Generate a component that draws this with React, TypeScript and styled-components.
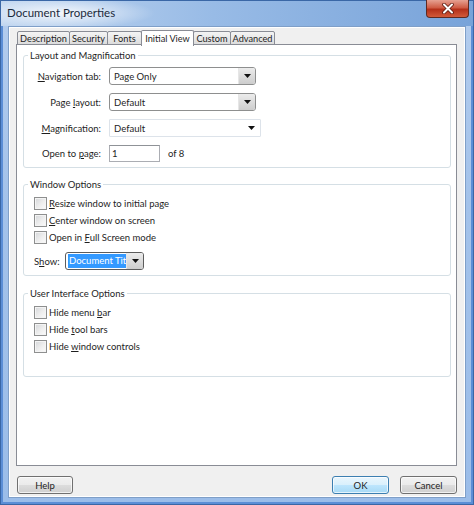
import React from "react";
import styled, { createGlobalStyle } from "styled-components";

const GlobalStyle = createGlobalStyle`
  html, body {
    margin: 0;
    padding: 0;
    background: #7ea6d8;
  }
  body {
    font-family: Lato, "Open Sans", sans-serif;
    font-size: 9.5px;
    color: #1e1e1e;
  }
  * {
    box-sizing: border-box;
  }
`;

const Window = styled.div`
  width: 474px;
  height: 505px;
  display: flex;
  flex-direction: column;
  background: linear-gradient(to bottom, #b4cdee 0%, #a3c2ea 40%, #9bbde9 100%);
  box-shadow: inset 0 0 0 1px #3a67a6, inset 0 0 0 3px #5b8ed6;
  overflow: hidden;
`;

const TitleBar = styled.div`
  height: 26px;
  flex-shrink: 0;
  display: flex;
  align-items: flex-start;
  padding-left: 7px;
  padding-right: 5px;
  background:
    radial-gradient(ellipse 95px 16px at 60px 13px, rgba(255, 255, 255, 0.85), rgba(255, 255, 255, 0)),
    linear-gradient(to right, #c0d6f0 0%, #98bbe6 45%, #78a3d9 100%);
  box-shadow: inset 0 1px 0 #3a67a6, inset 1px 0 0 #3a67a6, inset -1px 0 0 #3a67a6;
`;

const Title = styled.div`
  line-height: 26px;
  font-size: 11.5px;
  color: #1b2a3c;
`;

const CloseButton = styled.div`
  margin-left: auto;
  width: 43px;
  height: 18px;
  display: flex;
  align-items: center;
  justify-content: center;
  border: 1px solid #5e2a22;
  border-top: none;
  border-radius: 0 0 4px 4px;
  background: linear-gradient(to bottom, #e6a192 0%, #cf5c45 45%, #b4301a 55%, #d25a3a 100%);
`;

const Body = styled.div`
  flex: 1;
  margin: 0 8px 7px 8px;
  display: flex;
  flex-direction: column;
  padding: 3px 8px 3px 7px;
  background: #f0f0f0;
  border: 1px solid #7f9fc8;
  box-shadow: inset 0 0 0 1px #ffffff;
`;

const TabStrip = styled.div`
  display: flex;
  align-items: flex-end;
  padding-left: 1px;
  position: relative;
  z-index: 1;
`;

const Tab = styled.div<{ $active?: boolean; $width: number }>`
  width: ${(p) => p.$width}px;
  height: ${(p) => (p.$active ? "16px" : "14px")};
  margin-right: -1px;
  margin-bottom: ${(p) => (p.$active ? "-1px" : "0")};
  display: flex;
  align-items: center;
  justify-content: center;
  font-size: 9.2px;
  border: 1px solid #898c95;
  border-bottom: ${(p) => (p.$active ? "none" : "1px solid #898c95")};
  border-radius: 2px 2px 0 0;
  background: ${(p) =>
    p.$active ? "#ffffff" : "linear-gradient(to bottom, #f4f4f4 0%, #e9e9e9 50%, #dcdcdc 100%)"};
  position: relative;
  z-index: ${(p) => (p.$active ? 2 : 1)};
  white-space: nowrap;
`;

const Panel = styled.div`
  flex: 1;
  margin-top: -1px;
  background: #ffffff;
  border: 1px solid #898c95;
  padding: 4px 5px 0 6px;
  display: flex;
  flex-direction: column;
`;

const Group = styled.fieldset<{ $gap?: number }>`
  margin: 0 0 ${(p) => p.$gap ?? 0}px 0;
  padding: 0;
  min-width: 0;
  border: 1px solid #d5dfe5;
  border-radius: 3px;
`;

const Legend = styled.legend`
  margin-left: 4px;
  padding: 0 2px;
  line-height: 13px;
`;

const GroupContent = styled.div<{ $pad: string }>`
  padding: ${(p) => p.$pad};
`;

const FieldGrid = styled.div`
  display: grid;
  grid-template-columns: 77px auto;
  column-gap: 8px;
  row-gap: 8px;
  align-items: center;
`;

const FieldLabel = styled.div`
  text-align: right;
  white-space: nowrap;
`;

const Key = styled.span`
  text-decoration: underline;
`;

const Select = styled.div<{ $width: number; $flat?: boolean; $focused?: boolean }>`
  width: ${(p) => p.$width}px;
  height: 18px;
  display: flex;
  align-items: stretch;
  border: 1px solid ${(p) => (p.$flat ? "#dde3ea" : p.$focused ? "#5c5c5c" : "#8e8f8f")};
  border-radius: ${(p) => (p.$flat ? "1px" : "3px")};
  background: #ffffff;
  overflow: hidden;
`;

const SelectText = styled.div<{ $focused?: boolean }>`
  flex: 1;
  min-width: 0;
  display: flex;
  align-items: center;
  padding-left: ${(p) => (p.$focused ? "2px" : "4px")};
  white-space: nowrap;
  overflow: hidden;
`;

const Highlight = styled.span`
  background: #3399ff;
  color: #ffffff;
  line-height: 14px;
  padding: 0 1px;
  white-space: nowrap;
`;

const SelectArrow = styled.div<{ $flat?: boolean }>`
  width: 17px;
  flex-shrink: 0;
  display: flex;
  align-items: center;
  justify-content: center;
  background: ${(p) => (p.$flat ? "#ffffff" : "linear-gradient(to bottom, #ececec 0%, #dcdcdc 50%, #cdcdcd 100%)")};
  border-left: ${(p) => (p.$flat ? "none" : "1px solid #e6e6e6")};
`;

const PageRow = styled.div`
  display: flex;
  align-items: center;
  gap: 8px;
`;

const TextInput = styled.div`
  width: 51px;
  height: 17px;
  display: flex;
  align-items: center;
  padding-left: 2px;
  border: 1px solid #abadb3;
  border-top-color: #8f9297;
  background: #ffffff;
`;

const CheckList = styled.div`
  display: flex;
  flex-direction: column;
  gap: 4px;
`;

const CheckRow = styled.div`
  display: flex;
  align-items: center;
  gap: 2px;
  height: 13px;
  white-space: nowrap;
`;

const CheckBox = styled.div`
  width: 13px;
  height: 13px;
  flex-shrink: 0;
  border: 1px solid #8e8f8f;
  background: linear-gradient(135deg, #d4d6d9 0%, #eeeeee 55%, #fbfbfb 100%);
  box-shadow: inset 0 0 0 1px #f4f4f4;
`;

const ShowRow = styled.div`
  display: flex;
  align-items: center;
  margin-top: 8px;
`;

const ShowLabel = styled.div`
  width: 31px;
`;

const Footer = styled.div`
  display: flex;
  align-items: center;
  margin-top: 10px;
  padding-left: 1px;
`;

const Button = styled.div<{ $width: number; $default?: boolean }>`
  width: ${(p) => p.$width}px;
  height: 18px;
  display: flex;
  align-items: center;
  justify-content: center;
  border: 1px solid ${(p) => (p.$default ? "#3c7fb1" : "#707070")};
  border-radius: 3px;
  background: ${(p) =>
    p.$default
      ? "linear-gradient(to bottom, #eaf6fd 0%, #d9f0fc 50%, #bee6fd 50%, #a7d9f5 100%)"
      : "linear-gradient(to bottom, #f2f2f2 0%, #ebebeb 50%, #dddddd 50%, #cfcfcf 100%)"};
  box-shadow: inset 0 0 0 1px rgba(255, 255, 255, 0.7);
`;

const Spacer = styled.div`
  flex: 1;
`;

const ButtonGap = styled.div`
  width: 11px;
`;

const Arrow = () => (
  <svg width="7" height="4" viewBox="0 0 7 4">
    <path d="M0 0h7L3.5 4z" fill="#111" />
  </svg>
);

const CloseGlyph = () => (
  <svg width="12" height="11" viewBox="0 0 12 11">
    <path d="M2 1.5l8 8M10 1.5l-8 8" stroke="#5a1a10" strokeWidth="3.6" strokeLinecap="round" />
    <path d="M2 1.5l8 8M10 1.5l-8 8" stroke="#ffffff" strokeWidth="2" strokeLinecap="round" />
  </svg>
);

const tabs = [
  { label: "Description", width: 53 },
  { label: "Security", width: 39 },
  { label: "Fonts", width: 35 },
  { label: "Initial View", width: 53 },
  { label: "Custom", width: 38 },
  { label: "Advanced", width: 45 },
];

const App: React.FC = () => {
  return (
    <>
      <GlobalStyle />
      <Window>
        <TitleBar>
          <Title>Document Properties</Title>
          <CloseButton>
            <CloseGlyph />
          </CloseButton>
        </TitleBar>
        <Body>
          <TabStrip>
            {tabs.map((t) => (
              <Tab key={t.label} $width={t.width} $active={t.label === "Initial View"}>
                {t.label}
              </Tab>
            ))}
          </TabStrip>
          <Panel>
            <Group $gap={10}>
              <Legend>Layout and Magnification</Legend>
              <GroupContent $pad="5px 0 5px 0">
                <FieldGrid>
                  <FieldLabel>
                    <Key>N</Key>avigation tab:
                  </FieldLabel>
                  <Select $width={147}>
                    <SelectText>Page Only</SelectText>
                    <SelectArrow>
                      <Arrow />
                    </SelectArrow>
                  </Select>
                  <FieldLabel>
                    Page <Key>l</Key>ayout:
                  </FieldLabel>
                  <Select $width={147}>
                    <SelectText>Default</SelectText>
                    <SelectArrow>
                      <Arrow />
                    </SelectArrow>
                  </Select>
                  <FieldLabel>
                    <Key>M</Key>agnification:
                  </FieldLabel>
                  <Select $width={152} $flat>
                    <SelectText>Default</SelectText>
                    <SelectArrow $flat>
                      <Arrow />
                    </SelectArrow>
                  </Select>
                  <FieldLabel>
                    Open to <Key>p</Key>age:
                  </FieldLabel>
                  <PageRow>
                    <TextInput>1</TextInput>
                    <span>of 8</span>
                  </PageRow>
                </FieldGrid>
              </GroupContent>
            </Group>

            <Group $gap={11}>
              <Legend>Window Options</Legend>
              <GroupContent $pad="6px 0 5px 10px">
                <CheckList>
                  <CheckRow>
                    <CheckBox />
                    <span>
                      <Key>R</Key>esize window to initial page
                    </span>
                  </CheckRow>
                  <CheckRow>
                    <CheckBox />
                    <span>
                      <Key>C</Key>enter window on screen
                    </span>
                  </CheckRow>
                  <CheckRow>
                    <CheckBox />
                    <span>
                      Open in <Key>F</Key>ull Screen mode
                    </span>
                  </CheckRow>
                </CheckList>
                <ShowRow>
                  <ShowLabel>
                    S<Key>h</Key>ow:
                  </ShowLabel>
                  <Select $width={79} $focused>
                    <SelectText $focused>
                      <Highlight>Document Title</Highlight>
                    </SelectText>
                    <SelectArrow>
                      <Arrow />
                    </SelectArrow>
                  </Select>
                </ShowRow>
              </GroupContent>
            </Group>

            <Group>
              <Legend>User Interface Options</Legend>
              <GroupContent $pad="6px 0 23px 10px">
                <CheckList>
                  <CheckRow>
                    <CheckBox />
                    <span>
                      Hide menu <Key>b</Key>ar
                    </span>
                  </CheckRow>
                  <CheckRow>
                    <CheckBox />
                    <span>
                      Hide <Key>t</Key>ool bars
                    </span>
                  </CheckRow>
                  <CheckRow>
                    <CheckBox />
                    <span>
                      Hide <Key>w</Key>indow controls
                    </span>
                  </CheckRow>
                </CheckList>
              </GroupContent>
            </Group>
          </Panel>
          <Footer>
            <Button $width={56}>Help</Button>
            <Spacer />
            <Button $width={57} $default>
              OK
            </Button>
            <ButtonGap />
            <Button $width={57}>Cancel</Button>
          </Footer>
        </Body>
      </Window>
    </>
  );
};

export default App;
